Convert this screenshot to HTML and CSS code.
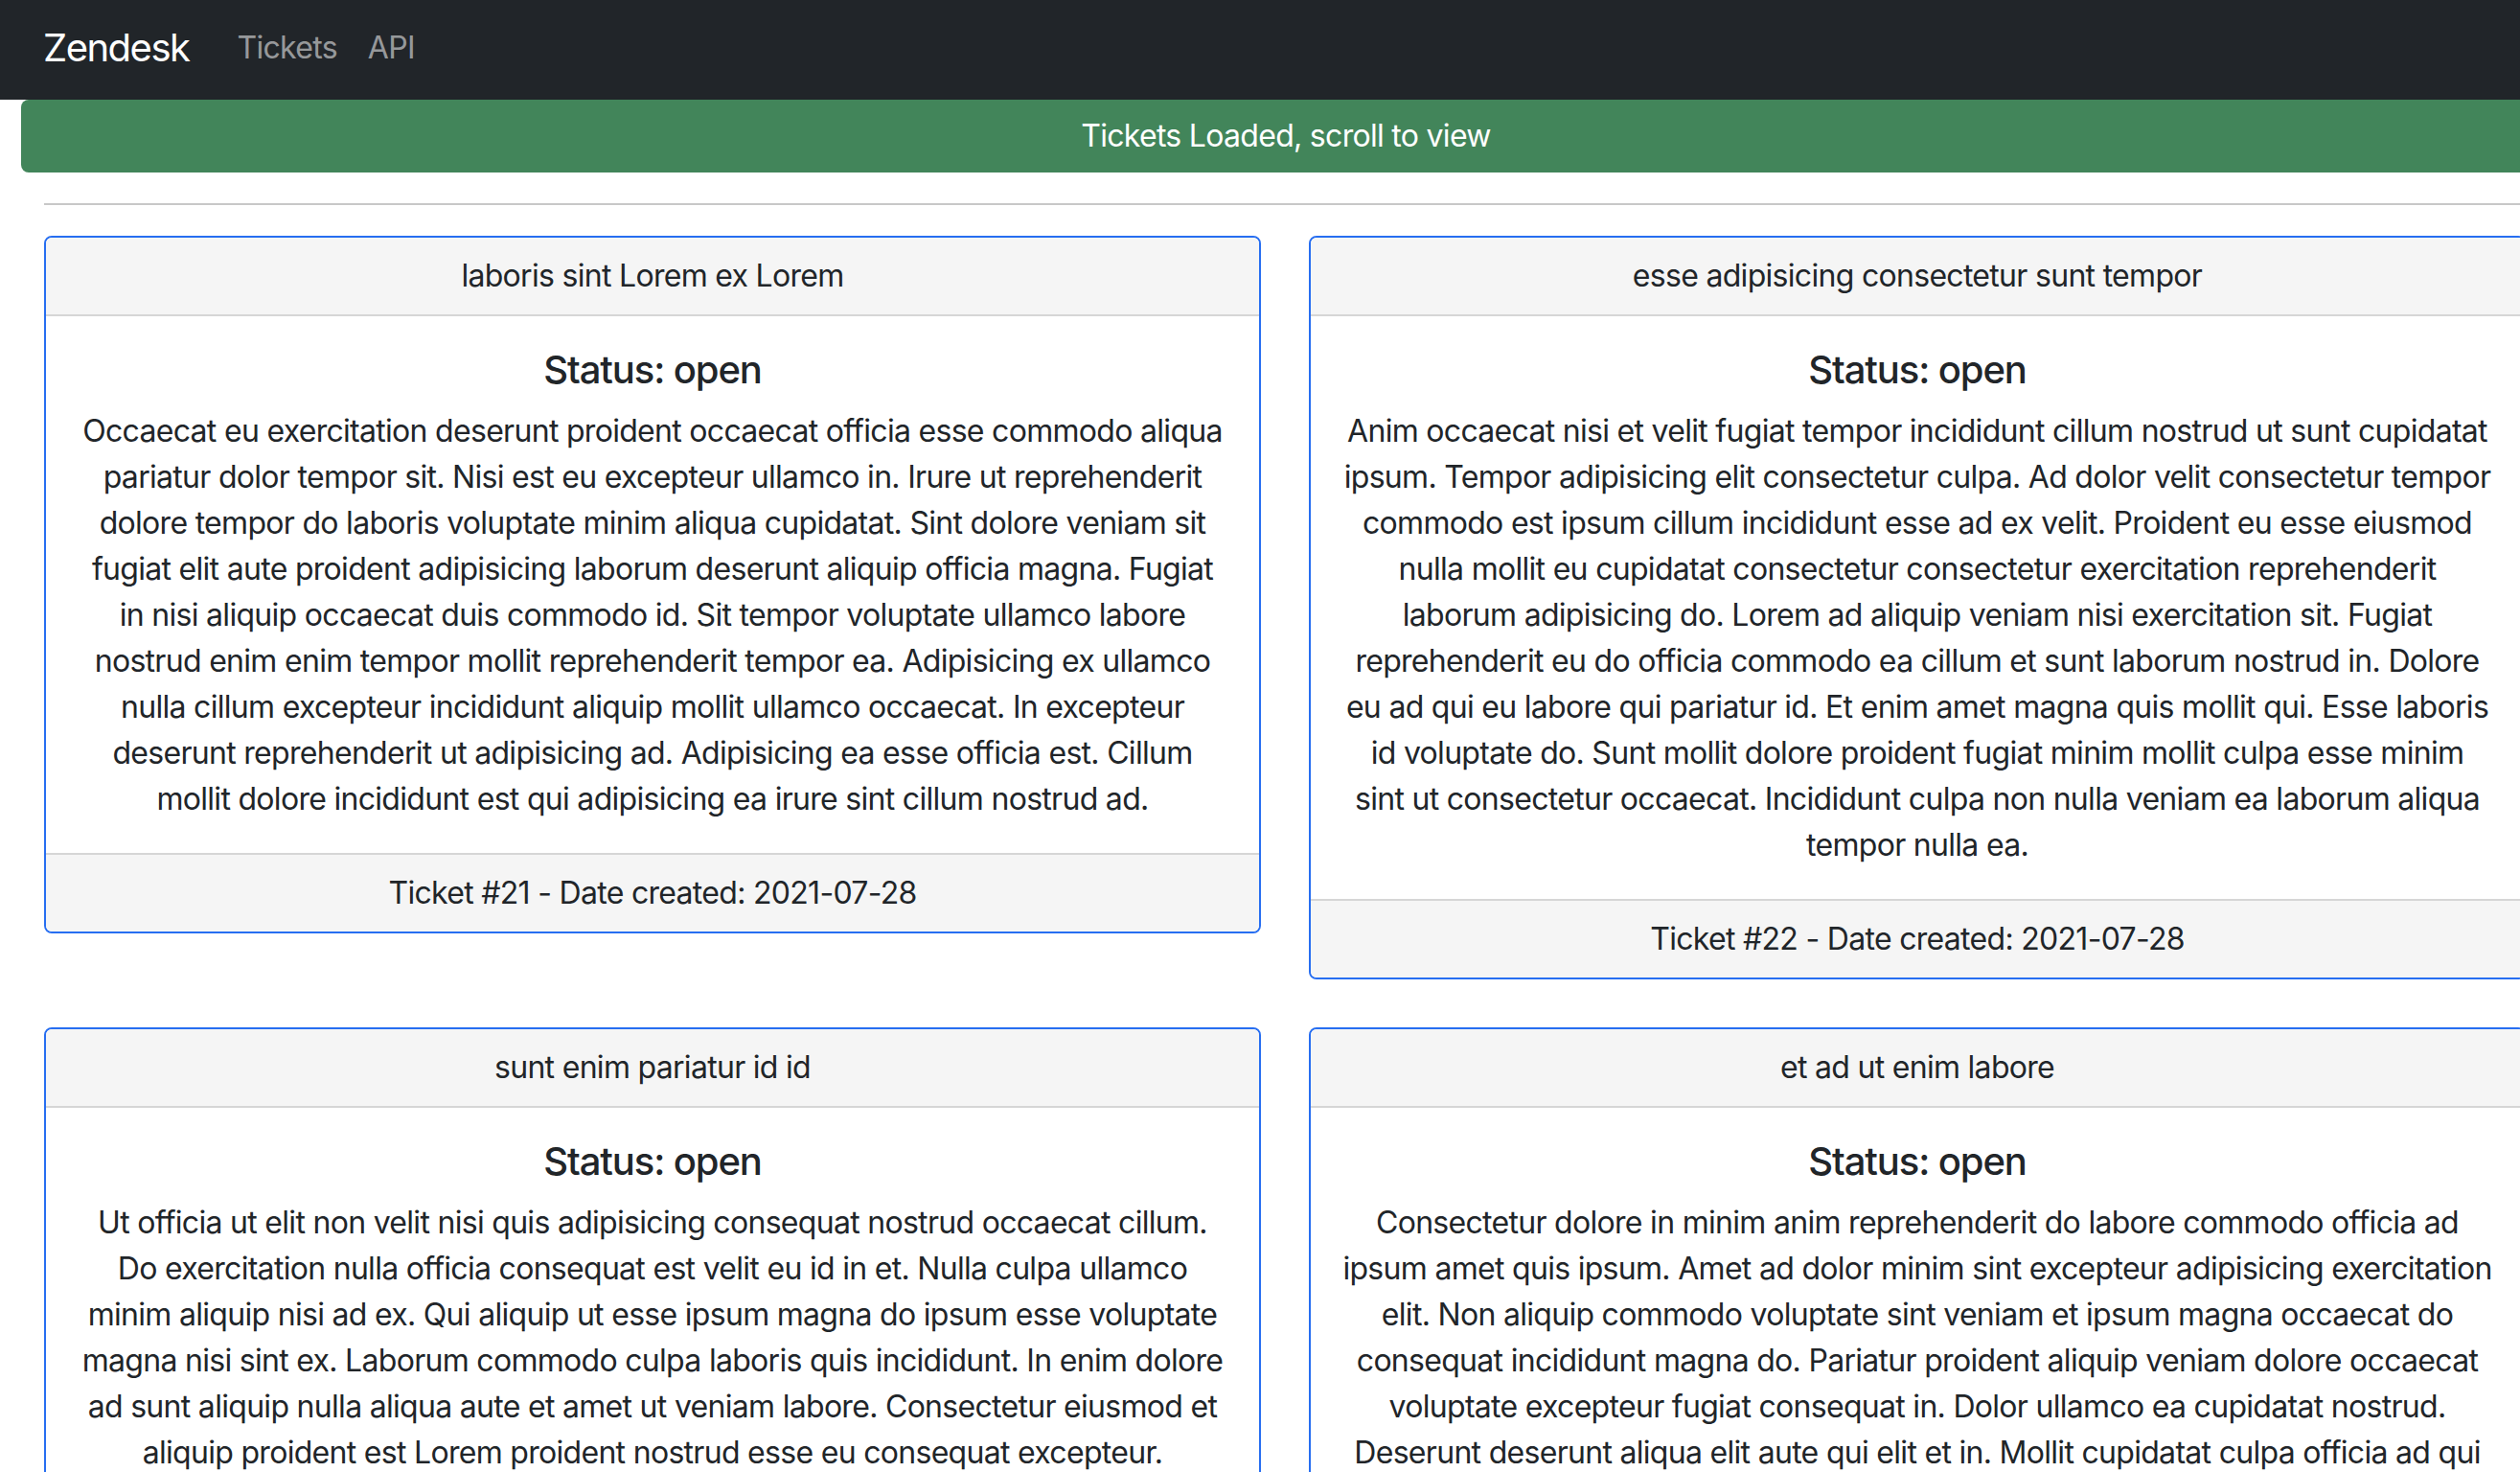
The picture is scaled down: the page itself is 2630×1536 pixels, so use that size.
FILE: index.html
```html
<!DOCTYPE html>
<html lang="en">
<head>
<meta charset="utf-8">
<title>Zendesk Tickets</title>
<link rel="stylesheet" href="styles.css">
</head>
<body>
<nav class="navbar">
  <a class="brand" href="#">Zendesk</a>
  <a class="nav-link" href="#">Tickets</a>
  <a class="nav-link" href="#">API</a>
</nav>
<div class="alert">Tickets Loaded, scroll to view</div>
<main class="container">
  <hr class="divider">
  <div class="grid">
    <div class="card">
      <div class="card-header">laboris sint Lorem ex Lorem</div>
      <div class="card-body">
        <h5 class="card-title">Status: open</h5>
        <p class="card-text">Occaecat eu exercitation deserunt proident occaecat officia esse commodo aliqua pariatur dolor tempor sit. Nisi est eu excepteur ullamco in. Irure ut reprehenderit dolore tempor do laboris voluptate minim aliqua cupidatat. Sint dolore veniam sit fugiat elit aute proident adipisicing laborum deserunt aliquip officia magna. Fugiat in nisi aliquip occaecat duis commodo id. Sit tempor voluptate ullamco labore nostrud enim enim tempor mollit reprehenderit tempor ea. Adipisicing ex ullamco nulla cillum excepteur incididunt aliquip mollit ullamco occaecat. In excepteur deserunt reprehenderit ut adipisicing ad. Adipisicing ea esse officia est. Cillum mollit dolore incididunt est qui adipisicing ea irure sint cillum nostrud ad.</p>
      </div>
      <div class="card-footer">Ticket #21 - Date created: 2021-07-28</div>
    </div>
    <div class="card">
      <div class="card-header">esse adipisicing consectetur sunt tempor</div>
      <div class="card-body">
        <h5 class="card-title">Status: open</h5>
        <p class="card-text">Anim occaecat nisi et velit fugiat tempor incididunt cillum nostrud ut sunt cupidatat ipsum. Tempor adipisicing elit consectetur culpa. Ad dolor velit consectetur tempor commodo est ipsum cillum incididunt esse ad ex velit. Proident eu esse eiusmod nulla mollit eu cupidatat consectetur consectetur exercitation reprehenderit laborum adipisicing do. Lorem ad aliquip veniam nisi exercitation sit. Fugiat reprehenderit eu do officia commodo ea cillum et sunt laborum nostrud in. Dolore eu ad qui eu labore qui pariatur id. Et enim amet magna quis mollit qui. Esse laboris id voluptate do. Sunt mollit dolore proident fugiat minim mollit culpa esse minim sint ut consectetur occaecat. Incididunt culpa non nulla veniam ea laborum aliqua tempor nulla ea.</p>
      </div>
      <div class="card-footer">Ticket #22 - Date created: 2021-07-28</div>
    </div>
    <div class="card">
      <div class="card-header">sunt enim pariatur id id</div>
      <div class="card-body">
        <h5 class="card-title">Status: open</h5>
        <p class="card-text">Ut officia ut elit non velit nisi quis adipisicing consequat nostrud occaecat cillum. Do exercitation nulla officia consequat est velit eu id in et. Nulla culpa ullamco minim aliquip nisi ad ex. Qui aliquip ut esse ipsum magna do ipsum esse voluptate magna nisi sint ex. Laborum commodo culpa laboris quis incididunt. In enim dolore ad sunt aliquip nulla aliqua aute et amet ut veniam labore. Consectetur eiusmod et aliquip proident est Lorem proident nostrud esse eu consequat excepteur.</p>
      </div>
      <div class="card-footer">Ticket #23 - Date created: 2021-07-28</div>
    </div>
    <div class="card">
      <div class="card-header">et ad ut enim labore</div>
      <div class="card-body">
        <h5 class="card-title">Status: open</h5>
        <p class="card-text">Consectetur dolore in minim anim reprehenderit do labore commodo officia ad ipsum amet quis ipsum. Amet ad dolor minim sint excepteur adipisicing exercitation elit. Non aliquip commodo voluptate sint veniam et ipsum magna occaecat do consequat incididunt magna do. Pariatur proident aliquip veniam dolore occaecat voluptate excepteur fugiat consequat in. Dolor ullamco ea cupidatat nostrud. Deserunt deserunt aliqua elit aute qui elit et in. Mollit cupidatat culpa officia ad qui ullamco.</p>
      </div>
      <div class="card-footer">Ticket #24 - Date created: 2021-07-28</div>
    </div>
  </div>
</main>
</body>
</html>
```

FILE: styles.css
```css
html, body {
  overflow: hidden;
}
body {
  margin: 0;
  font-family: Inter, "Liberation Sans", sans-serif;
  font-size: 32px;
  line-height: 48px;
  letter-spacing: -0.7px;
  color: #212529;
  background: #fff;
}
a {
  text-decoration: none;
}
.navbar {
  display: flex;
  align-items: center;
  height: 104px;
  box-sizing: border-box;
  padding: 0 0 4px 45px;
  background: #212529;
}
.brand {
  font-size: 40px;
  line-height: 60px;
  letter-spacing: -1.5px;
  color: #fff;
  margin-right: 34px;
}
.nav-link {
  font-size: 32px;
  line-height: 48px;
  padding: 0 16px;
  color: rgba(255, 255, 255, 0.55);
}
.alert {
  margin-left: 22px;
  width: 2640px;
  box-sizing: border-box;
  padding: 14px 0;
  background: #42855a;
  color: #fff;
  text-align: center;
  border-radius: 8px;
}
.container {
  width: 2590px;
  padding-left: 46px;
}
.divider {
  margin: 32px 0;
  border: 0;
  border-top: 2px solid #c8c8c8;
}
.grid {
  display: grid;
  grid-template-columns: 1270px 1270px;
  column-gap: 50px;
  row-gap: 50px;
  align-items: start;
}
.card {
  border: 2px solid #276ef1;
  border-radius: 8px;
  overflow: hidden;
  text-align: center;
}
.card-header {
  padding: 16px 32px;
  background: #f5f5f5;
  border-bottom: 2px solid #d6d6d6;
}
.card-body {
  padding: 32px 33.2px;
}
.card-title {
  margin: 0 0 16px;
  font-size: 40px;
  line-height: 48px;
  font-weight: 500;
  letter-spacing: -1.1px;
}
.card-text {
  margin: 0;
}
.card-footer {
  padding: 16px 32px;
  background: #f5f5f5;
  border-top: 2px solid #d6d6d6;
}
```
